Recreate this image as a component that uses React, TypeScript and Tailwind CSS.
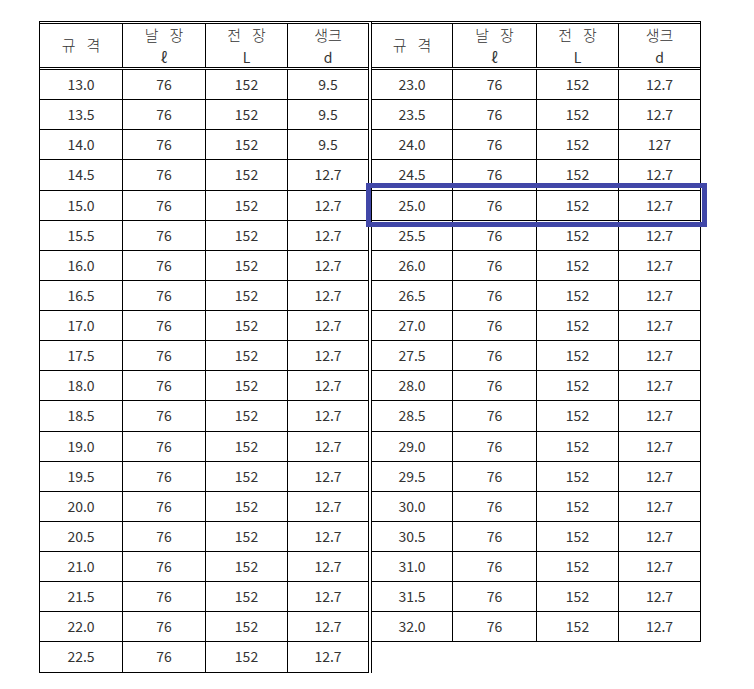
import React from 'react';

const font = { fontFamily: '"Noto Sans CJK KR", "Noto Sans", sans-serif' };

const leftRows = [
  '13.0', '13.5', '14.0', '14.5', '15.0', '15.5', '16.0', '16.5', '17.0', '17.5',
  '18.0', '18.5', '19.0', '19.5', '20.0', '20.5', '21.0', '21.5', '22.0', '22.5',
].map((s) => [s, '76', '152', parseFloat(s) < 14.5 ? '9.5' : '12.7']);

const rightRows = [
  '23.0', '23.5', '24.0', '24.5', '25.0', '25.5', '26.0', '26.5', '27.0', '27.5',
  '28.0', '28.5', '29.0', '29.5', '30.0', '30.5', '31.0', '31.5', '32.0',
].map((s) => [s, '76', '152', s === '24.0' ? '127' : '12.7']);

// two syllables with the wide gap used in the header
const Spaced = ({ a, b }: { a: string; b: string }) => (
  <span className="flex gap-[11px] text-[15px] font-light">
    <span>{a}</span>
    <span>{b}</span>
  </span>
);

const SpecTable = ({ rows, widths, right }: { rows: string[][]; widths: string[]; right?: boolean }) => (
  <div
    className={
      right
        ? 'border-t-[3px] border-r border-double border-black'
        : 'border-t-[3px] border-l border-r-4 border-double border-black'
    }
  >
    <div className="flex h-[46px] border-b-[3px] border-double border-black">
      <div className={`${widths[0]} flex items-center justify-center border-r border-black`}>
        <Spaced a="규" b="격" />
      </div>
      <div className={`${widths[1]} flex flex-col items-center justify-center border-r border-black leading-[22px]`}>
        <Spaced a="날" b="장" />
        <span>ℓ</span>
      </div>
      <div className={`${widths[2]} flex flex-col items-center justify-center border-r border-black leading-[22px]`}>
        <Spaced a="전" b="장" />
        <span>L</span>
      </div>
      <div className={`${widths[3]} flex flex-col items-center justify-center leading-[22px]`}>
        <span className="text-[15px] font-light">생크</span>
        <span>d</span>
      </div>
    </div>
    {rows.map((r, i) => (
      <div key={i} className="flex h-[30.13px] border-b border-black">
        {r.map((v, j) => (
          <div
            key={j}
            className={`${widths[j]} flex items-center justify-center ${j < 3 ? 'border-r border-black' : ''}`}
          >
            {v}
          </div>
        ))}
      </div>
    ))}
  </div>
);

export default function App() {
  return (
    <div className="w-[754px] h-[689px] bg-white text-[14px] text-[#333]" style={font}>
      <div className="relative flex items-start pt-[21px] pl-[39px]">
        <SpecTable rows={leftRows} widths={['w-[83px]', 'w-[83px]', 'w-[82px]', 'w-[80px]']} />
        <SpecTable rows={rightRows} widths={['w-[81px]', 'w-[84px]', 'w-[82px]', 'w-[81px]']} right />
        <div className="absolute left-[366px] top-[183px] w-[341px] h-[44px] border-[5px] border-[#4147a8]" />
      </div>
    </div>
  );
}
